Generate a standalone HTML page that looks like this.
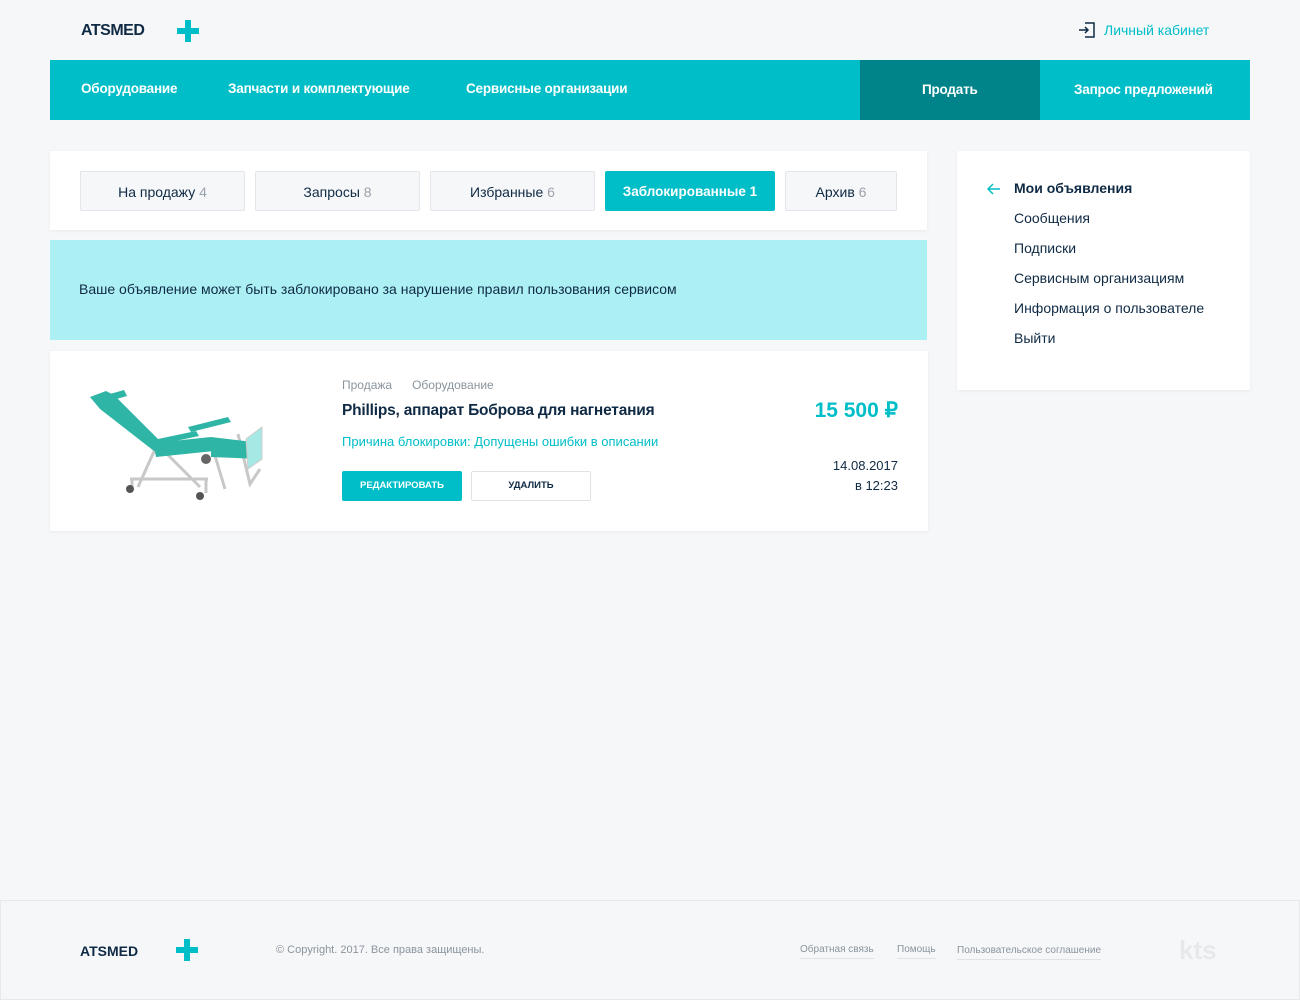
<!DOCTYPE html><html><head><meta charset="utf-8"><style>
*{margin:0;padding:0;box-sizing:border-box}
body{width:1300px;height:1000px;background:#f6f7f9;font-family:"Liberation Sans",sans-serif;color:#0f2a44;position:relative;overflow:hidden}
.a{position:absolute}
.logo{font-weight:bold;font-size:16px;color:#0f2a44}
.plus{position:absolute;width:22px;height:22px}
.plus:before{content:"";position:absolute;left:8px;top:0;width:6px;height:22px;background:#00bec8}
.plus:after{content:"";position:absolute;top:8px;left:0;height:6px;width:22px;background:#00bec8}
.nav{left:50px;top:60px;width:1200px;height:60px;background:#00bec8}
.nav span{position:absolute;top:21px;color:#fff;font-weight:bold;font-size:13.5px;letter-spacing:-0.2px}
.card{background:#fff;box-shadow:0 1px 3px rgba(0,0,0,.06)}
.tab{position:absolute;top:20px;height:40px;border:1px solid #e3e6ea;background:#f6f7f9;border-radius:2px;font-size:14px;text-align:center;line-height:40px}
.tab i{font-style:normal;color:#9aa3ab}
.side div{position:absolute;left:57px;font-size:14px}
</style></head><body>
<div class="a logo" style="left:81px;top:22px;letter-spacing:-0.5px">ATSMED</div>
<div class="plus" style="left:177px;top:20px"></div>
<svg class="a" style="left:1078px;top:21px" width="18" height="18" viewBox="0 0 18 18" fill="none" stroke="#0f2a44" stroke-width="1.5"><path d="M7 2h9v14H7M1 9h9M7 6l3 3-3 3"/></svg>
<div class="a" style="left:1104px;top:22px;font-size:14px;color:#00bec8">Личный кабинет</div>
<div class="a nav"><span style="left:31px">Оборудование</span><span style="left:178px">Запчасти и комплектующие</span><span style="left:416px">Сервисные организации</span>
<div class="a" style="left:810px;top:0;width:180px;height:60px;background:#008489"></div><span style="left:872px;top:22px">Продать</span><span style="left:1024px;top:22px">Запрос предложений</span></div>
<div class="a card" style="left:50px;top:151px;width:877px;height:79px">
<div class="tab" style="left:30px;width:165px">На продажу <i>4</i></div>
<div class="tab" style="left:205px;width:165px">Запросы <i>8</i></div>
<div class="tab" style="left:380px;width:165px">Избранные <i>6</i></div>
<div class="tab" style="left:555px;width:170px;background:#00bec8;border-color:#00bec8;color:#fff;font-weight:bold;font-size:13.5px">Заблокированные 1</div>
<div class="tab" style="left:735px;width:112px">Архив <i>6</i></div></div>
<div class="a" style="left:50px;top:240px;width:877px;height:100px;background:#adf0f4"><div class="a" style="left:29px;top:41px;font-size:14px">Ваше объявление может быть заблокировано за нарушение правил пользования сервисом</div></div>
<div class="a card" style="left:50px;top:351px;width:878px;height:180px">
<svg class="a" style="left:38px;top:38px" width="180" height="115" viewBox="0 0 180 115"><g stroke="#c8c8c8" stroke-width="3" fill="none"><path d="M68 58l-18 40M72 58l40 40M42 90h78M44 90v10M118 90v14M125 60l12 40M150 45l12 50 10-15"/></g><circle cx="42" cy="100" r="4" fill="#555"/><circle cx="112" cy="107" r="4" fill="#555"/><circle cx="118" cy="70" r="5" fill="#666"/><g fill="#2fb5a5"><path d="M2 8l16-6 8 4 48 48-8 8-54-42z"/><path d="M65 54l58-6 3 14-58 6z"/><path d="M123 48l50 6 0 16-50 -2z"/><path d="M70 50l38-8 3 5-38 8z"/><path d="M100 38l40-10 3 5-40 10z"/><path d="M22 5l14-4 3 6-14 4z"/></g><path d="M158 50l16-12 0 32-14 10z" fill="#a6e8e4" stroke="#ccc"/></svg>
<div class="a" style="left:292px;top:27px;font-size:12px;color:#8a949c">Продажа &nbsp;&nbsp;&nbsp;&nbsp;&nbsp;Оборудование</div>
<div class="a" style="left:292px;top:51px;font-size:15.5px;font-weight:bold;letter-spacing:-0.2px">Phillips, аппарат Боброва для нагнетания</div>
<div class="a" style="left:292px;top:83px;font-size:13px;color:#00bec8">Причина блокировки: Допущены ошибки в описании</div>
<div class="a" style="left:292px;top:120px;width:120px;height:30px;background:#00bec8;border-radius:2px;color:#fff;font-size:9.5px;font-weight:bold;text-align:center;line-height:30px">РЕДАКТИРОВАТЬ</div>
<div class="a" style="left:421px;top:120px;width:120px;height:30px;border:1px solid #e0e3e6;border-radius:2px;font-size:9.5px;font-weight:bold;text-align:center;line-height:28px">УДАЛИТЬ</div>
<div class="a" style="right:30px;top:47px;font-size:21px;font-weight:bold;color:#00bec8">15 500 ₽</div>
<div class="a" style="right:30px;top:105px;font-size:13px;text-align:right;line-height:20px">14.08.2017<br>в 12:23</div></div>
<div class="a card side" style="left:957px;top:151px;width:293px;height:239px">
<svg class="a" style="left:30px;top:32px" width="14" height="12" viewBox="0 0 14 12" fill="none" stroke="#00bec8" stroke-width="1.5"><path d="M13 6H2M6 1L1 6l5 5"/></svg>
<div style="top:29px;font-weight:bold">Мои объявления</div><div style="top:59px">Сообщения</div><div style="top:89px">Подписки</div><div style="top:119px">Сервисным организациям</div><div style="top:149px">Информация о пользователе</div><div style="top:179px">Выйти</div></div>
<div class="a" style="left:0;top:900px;width:1300px;height:100px;border:1px solid #e6e9ec;background:#f6f7f9">
<div class="a logo" style="left:79px;top:42px;font-size:14px">ATSMED</div><div class="plus" style="left:175px;top:38px"></div>
<div class="a" style="left:275px;top:43px;font-size:11px;color:#8a949c">© Copyright. 2017. Все права защищены.</div>
<div class="a" style="left:799px;top:43px;font-size:10px;color:#8a949c;border-bottom:1px solid #e0e3e6;padding-bottom:3px">Обратная связь</div>
<div class="a" style="left:896px;top:43px;font-size:10px;color:#8a949c;border-bottom:1px solid #e0e3e6;padding-bottom:3px">Помощь</div>
<div class="a" style="left:956px;top:44px;font-size:10px;color:#8a949c;border-bottom:1px solid #e0e3e6;padding-bottom:3px">Пользовательское соглашение</div>
<div class="a" style="left:1178px;top:34px;font-size:26px;font-weight:bold;color:#e6e9ec">kts</div></div>
</body></html>
